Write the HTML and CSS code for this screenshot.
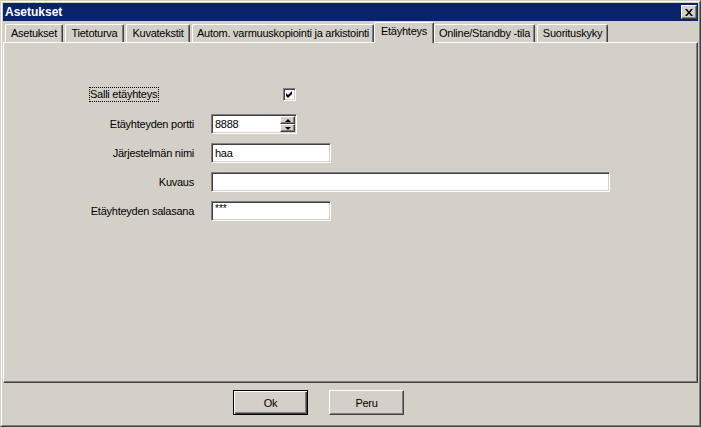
FILE: index.html
```html
<!DOCTYPE html>
<html lang="fi">
<head>
<meta charset="utf-8">
<title>Asetukset</title>
<link rel="stylesheet" href="styles.css">
</head>
<body>
<div class="window">
  <div class="frame">
    <div class="titlebar">
      <span class="title">Asetukset</span>
      <div class="close"><svg width="8" height="7" viewBox="0 0 8 7"><path d="M0 0h2l2 2.4 2-2.4h2l-3 3.5 3 3.5h-2l-2-2.4-2 2.4h-2l3-3.5z" fill="#000"/></svg></div>
    </div>
    <div class="tabs">
      <div class="tab t1">Asetukset</div>
      <div class="tab t2">Tietoturva</div>
      <div class="tab t3">Kuvatekstit</div>
      <div class="tab t4">Autom. varmuuskopiointi ja arkistointi</div>
      <div class="tab t5 selected">Etäyhteys</div>
      <div class="tab t6">Online/Standby -tila</div>
      <div class="tab t7">Suorituskyky</div>
    </div>
    <div class="panel">
      <div class="form">
        <div class="row row-check">
          <div class="cell-left"><span class="focus">Salli etäyhteys</span></div>
          <div class="cell-right"><span class="checkbox"><svg width="7" height="7" viewBox="0 0 7 7"><path d="M0 2L2 4L6 0V3L2 7L0 5Z" fill="#000"/></svg></span></div>
        </div>
        <div class="row">
          <div class="lbl">Etäyhteyden portti</div>
          <div class="field spin w-spin"><span class="val">8888</span><div class="updown"><div class="ud"><span class="arr up"></span></div><div class="ud"><span class="arr down"></span></div></div></div>
        </div>
        <div class="row">
          <div class="lbl">Järjestelmän nimi</div>
          <div class="field w-short"><span class="val">haa</span></div>
        </div>
        <div class="row">
          <div class="lbl">Kuvaus</div>
          <div class="field w-long"><span class="val"></span></div>
        </div>
        <div class="row">
          <div class="lbl">Etäyhteyden salasana</div>
          <div class="field w-short"><span class="val pw">***</span></div>
        </div>
      </div>
    </div>
    <div class="footer">
      <div class="btn default">Ok</div>
      <div class="btn">Peru</div>
    </div>
  </div>
</div>
</body>
</html>
```
FILE: styles.css
```css
html, body {
  margin: 0;
  padding: 0;
  background: #d4d0c8;
  overflow: hidden;
}
body {
  font-family: "Liberation Sans", Arial, sans-serif;
  font-size: 11px;
  letter-spacing: -0.25px;
  color: #000;
}
.window {
  width: 701px;
  height: 427px;
  box-sizing: border-box;
  border: 1px solid;
  border-color: #d4d0c8 #404040 #404040 #d4d0c8;
  background: #d4d0c8;
}
.frame {
  height: 100%;
  box-sizing: border-box;
  border: 1px solid;
  border-color: #fff #808080 #808080 #fff;
  padding: 1px;
  display: flex;
  flex-direction: column;
}
.titlebar {
  height: 18px;
  flex: none;
  background: #0a246a;
  display: flex;
  align-items: center;
  justify-content: space-between;
  padding: 0 1px 0 2px;
}
.title {
  color: #fff;
  font-weight: bold;
  font-size: 12px;
  letter-spacing: 0;
  line-height: 18px;
}
.close {
  width: 16px;
  height: 14px;
  box-sizing: border-box;
  background: #d4d0c8;
  border: 1px solid;
  border-color: #fff #404040 #404040 #fff;
  box-shadow: inset -1px -1px #808080;
  display: flex;
  align-items: center;
  justify-content: center;
  padding-right: 1px;
}
.close svg { display: block; }

.tabs {
  flex: none;
  height: 20px;
  margin-top: 1px;
  padding-left: 2px;
  display: flex;
  align-items: flex-end;
  gap: 2px;
  position: relative;
  z-index: 1;
}
.tab {
  height: 18px;
  box-sizing: border-box;
  border-top: 1px solid #fff;
  border-left: 1px solid #fff;
  border-right: 1px solid #404040;
  box-shadow: inset -1px 0 #808080;
  border-radius: 2px 2px 0 0;
  text-align: center;
  white-space: nowrap;
  line-height: 17px;
  overflow: hidden;
}
.t1 { width: 58px; }
.t2 { width: 59px; }
.t3 { width: 64px; }
.t4 { width: 182px; }
.t5 { width: 60px; }
.t6 { width: 101px; }
.t7 { width: 71px; }
.tab.selected {
  height: 21px;
  margin: 0 -2px -1px -2px;
  background: #d4d0c8;
  line-height: 16px;
  padding-bottom: 4px;
}

.panel {
  flex: none;
  height: 341px;
  box-sizing: border-box;
  border: 1px solid;
  border-color: #fff #404040 #404040 #fff;
  box-shadow: inset -1px -1px #808080;
}
.form {
  padding-top: 44px;
  padding-left: 85px;
  display: flex;
  flex-direction: column;
  gap: 9px;
}
.row {
  display: grid;
  grid-template-columns: 122px auto;
  align-items: center;
}
.row-check {
  height: 15px;
  margin-bottom: 3px;
}
.focus {
  display: inline-block;
  border: 1px dotted #000;
  line-height: 13px;
  padding-right: 1px;
}
.cell-right { display: flex; }
.checkbox {
  margin-left: 72px;
  width: 13px;
  height: 13px;
  box-sizing: border-box;
  border: 1px solid;
  border-color: #808080 #fff #fff #808080;
  box-shadow: inset 1px 1px #404040, inset -1px -1px #d4d0c8;
  background: #fff;
  display: flex;
  align-items: center;
  justify-content: center;
}
.checkbox svg { display: block; }
.lbl {
  text-align: right;
  padding-right: 17px;
  white-space: nowrap;
}
.field {
  height: 20px;
  box-sizing: border-box;
  border: 1px solid;
  border-color: #808080 #fff #fff #808080;
  box-shadow: inset 1px 1px #404040, inset -1px -1px #d4d0c8;
  background: #fff;
  padding-left: 3px;
  display: flex;
  align-items: flex-start;
}
.val {
  flex: 1;
  line-height: 18px;
  white-space: nowrap;
}
.val.pw {
  font-size: 10px;
  line-height: 14px;
  letter-spacing: 0;
}
.w-spin { width: 86px; }
.w-short { width: 120px; }
.w-long { width: 399px; }
.updown {
  width: 15px;
  height: 16px;
  margin: 1px 1px 0 0;
  display: flex;
  flex-direction: column;
}
.ud {
  height: 8px;
  box-sizing: border-box;
  background: #d4d0c8;
  border: 1px solid;
  border-color: #fff #404040 #404040 #fff;
  box-shadow: inset -1px -1px #808080;
  display: flex;
  align-items: center;
  justify-content: center;
}
.arr {
  width: 0;
  height: 0;
  border-left: 3px solid transparent;
  border-right: 3px solid transparent;
}
.arr.up { border-bottom: 3px solid #000; }
.arr.down { border-top: 3px solid #000; }

.footer {
  flex: 1;
  display: flex;
  align-items: flex-start;
  padding-top: 7px;
  padding-left: 230px;
  gap: 21px;
}
.btn {
  width: 75px;
  height: 25px;
  box-sizing: border-box;
  background: #d4d0c8;
  border: 1px solid;
  border-color: #fff #404040 #404040 #fff;
  box-shadow: inset -1px -1px #808080;
  display: flex;
  align-items: center;
  justify-content: center;
}
.btn.default {
  border-color: #000;
  box-shadow: inset 1px 1px #fff, inset -1px -1px #404040, inset -2px -2px #808080;
}
```
